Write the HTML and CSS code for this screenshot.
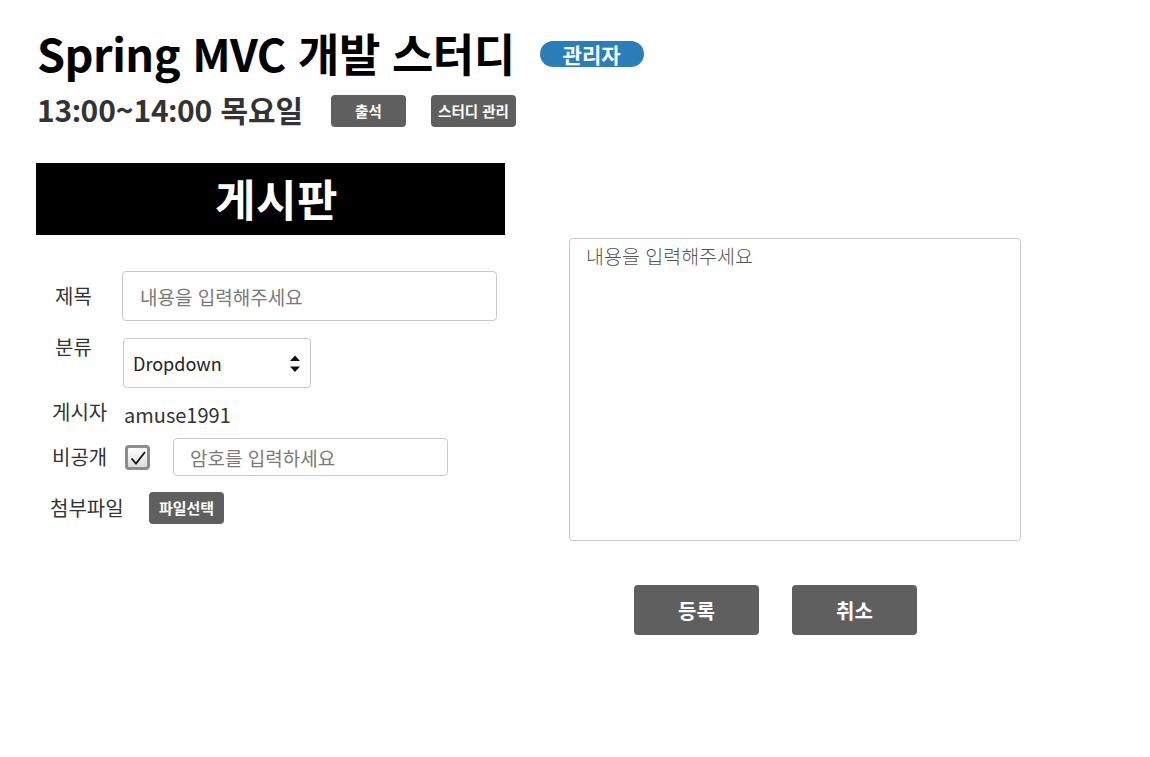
FILE: index.html
```html
<!DOCTYPE html>
<html lang="ko">
<head>
<meta charset="utf-8">
<title>게시판</title>
<link rel="stylesheet" href="styles.css">
</head>
<body>
<div class="page">
  <header class="head">
    <div class="title-row">
      <h1 class="title">Spring MVC 개발 스터디</h1>
      <span class="badge">관리자</span>
    </div>
    <div class="sub-row">
      <h2 class="subtitle">13<span class="colon">:</span>00~14<span class="colon">:</span>00 목요일</h2>
      <button class="btn btn-sm btn-attend">출석</button>
      <button class="btn btn-sm btn-manage">스터디 관리</button>
    </div>
  </header>

  <main class="board">
    <section class="left">
      <div class="banner">게시판</div>
      <div class="form">
        <div class="row row-title">
          <label class="label">제목</label>
          <input class="input input-title" type="text" placeholder="내용을 입력해주세요">
        </div>
        <div class="row row-cat">
          <label class="label">분류</label>
          <div class="select">
            <span>Dropdown</span>
            <svg class="arrows" width="12" height="20" viewBox="0 0 12 20"><path d="M1 7 L6 1.5 L11 7 Z M1 12.5 L6 18 L11 12.5 Z" fill="#111"/></svg>
          </div>
        </div>
        <div class="row row-writer">
          <span class="label">게시자</span>
          <span class="value">amuse1991</span>
        </div>
        <div class="row row-private">
          <span class="label">비공개</span>
          <span class="check">
            <svg width="18" height="16" viewBox="0 0 18 16"><path d="M2.5 8.5 L7 13.5 L16 2" fill="none" stroke="#111" stroke-width="1.8"/></svg>
          </span>
          <input class="input input-pw" type="text" placeholder="암호를 입력하세요">
        </div>
        <div class="row row-file">
          <span class="label">첨부파일</span>
          <button class="btn btn-sm btn-file">파일선택</button>
        </div>
      </div>
    </section>

    <section class="right">
      <textarea class="content" placeholder="내용을 입력해주세요"></textarea>
      <div class="actions">
        <button class="btn btn-lg">등록</button>
        <button class="btn btn-lg">취소</button>
      </div>
    </section>
  </main>
</div>
</body>
</html>
```

FILE: styles.css
```css
* { box-sizing: border-box; }

html, body {
  margin: 0;
  padding: 0;
  background: #fff;
}

body {
  font-family: "Noto Sans CJK KR", "Noto Sans", sans-serif;
  color: #222;
}

.page {
  width: 1150px;
  height: 757px;
  padding: 22px 0 0 36px;
}

.head {
  display: flex;
  flex-direction: column;
}

.title-row {
  display: flex;
  align-items: center;
  height: 62px;
}

.title {
  margin: 0 0 0 1px;
  font-size: 45px;
  font-weight: 700;
  color: #000;
  letter-spacing: -0.5px;
  line-height: 62px;
}

.badge {
  margin-left: 25px;
  margin-top: 2px;
  width: 104px;
  height: 26px;
  border-radius: 13px;
  background: #2a7fba;
  color: #fff;
  font-size: 21px;
  font-weight: 700;
  line-height: 26px;
  text-align: center;
}

.sub-row {
  display: flex;
  align-items: center;
  height: 42px;
  margin-top: 5px;
}

.subtitle {
  margin: 0 0 0 1px;
  font-size: 30px;
  font-weight: 700;
  color: #333;
  letter-spacing: -0.1px;
  line-height: 40px;
}

.colon {
  font-family: "Noto Sans", "Liberation Sans", sans-serif;
  font-weight: 700;
}

.btn {
  border: none;
  background: #5f5f5f;
  color: #fff;
  font-family: "Noto Sans CJK KR", "Noto Sans", sans-serif;
  font-weight: 700;
  border-radius: 4px;
  padding: 0;
  cursor: pointer;
}

.btn-sm {
  height: 32px;
  font-size: 14.5px;
  line-height: 28px;
}

.btn-attend {
  width: 75px;
  margin-left: 28px;
  margin-top: 1px;
}

.btn-manage {
  width: 85px;
  margin-left: 25px;
  margin-top: 1px;
}

.board {
  display: flex;
  margin-top: 32px;
}

.left {
  width: 469px;
}

.banner {
  height: 72px;
  background: #000;
  color: #fff;
  font-size: 44px;
  font-weight: 700;
  text-align: center;
  line-height: 70px;
  letter-spacing: 0.5px;
  padding-left: 12px;
}

.form {
  display: flex;
  flex-direction: column;
  padding-top: 36px;
}

.row {
  display: flex;
  align-items: center;
}

.label {
  flex: none;
  font-size: 20px;
  color: #333;
}

.input {
  border: 1px solid #c9c9c9;
  border-radius: 4px;
  font-family: "Noto Sans CJK KR", "Noto Sans", sans-serif;
  font-size: 19px;
  color: #333;
  outline: none;
  background: #fff;
}

.input::placeholder {
  color: #7a7a7a;
}

.row-title {
  height: 50px;
}

.row-title .label {
  width: 86px;
  padding-left: 19px;
  margin-top: -2px;
}

.input-title {
  width: 375px;
  height: 50px;
  padding: 0 0 0 17px;
}

.row-cat {
  margin-top: 17px;
  align-items: flex-start;
  height: 50px;
}

.row-cat .label {
  width: 87px;
  padding-left: 19px;
  margin-top: -6px;
}

.select {
  width: 188px;
  height: 50px;
  border: 1px solid #c9c9c9;
  border-radius: 4px;
  display: flex;
  align-items: center;
  justify-content: space-between;
  padding: 0 9px 0 9px;
  font-size: 18px;
  color: #222;
}

.arrows {
  margin-top: 2px;
}

.row-writer {
  margin-top: 8px;
  height: 36px;
}

.row-writer .label {
  width: 88px;
  padding-left: 16px;
  margin-top: -6px;
}

.value {
  font-size: 20px;
  color: #333;
}

.row-private {
  margin-top: 6px;
  height: 38px;
}

.row-private .label {
  width: 89px;
  padding-left: 16px;
  margin-top: -2px;
}

.check {
  flex: none;
  width: 25px;
  height: 25px;
  border: 3px solid #8c8c8c;
  border-radius: 4px;
  background: linear-gradient(#fdfdfd, #dcdcdc);
  display: flex;
  align-items: center;
  justify-content: center;
  margin-top: 1px;
}

.input-pw {
  margin-left: 23px;
  width: 275px;
  height: 38px;
  padding: 0 0 0 16px;
}

.row-file {
  margin-top: 16px;
  height: 32px;
}

.row-file .label {
  width: 113px;
  padding-left: 14px;
  margin-top: -2px;
}

.btn-file {
  width: 75px;
  font-size: 15px;
}

.right {
  margin-left: 64px;
  margin-top: 75px;
  display: flex;
  flex-direction: column;
}

.content {
  width: 452px;
  height: 303px;
  border: 1px solid #c9c9c9;
  border-radius: 4px;
  resize: none;
  padding: 2px 16px;
  font-family: "Noto Sans CJK KR", "Noto Sans", sans-serif;
  font-weight: 300;
  font-size: 19.5px;
  outline: none;
}

.content::placeholder {
  color: #555;
}

.actions {
  display: flex;
  gap: 33px;
  margin-top: 44px;
  padding-left: 65px;
}

.btn-lg {
  width: 125px;
  height: 50px;
  font-size: 20px;
}
```
